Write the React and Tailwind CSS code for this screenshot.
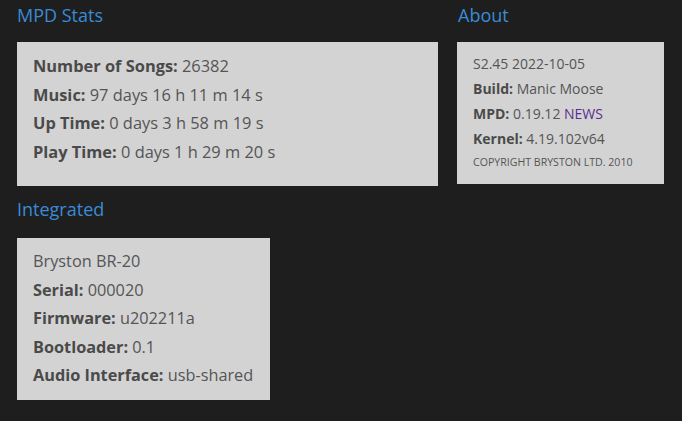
const font = { fontFamily: '"Open Sans", "Noto Sans", sans-serif' };

function Row({ label, value, children }) {
  return (
    <div>
      {label && <b className="font-bold text-[#4a4a4a]">{label}: </b>}
      {value}
      {children}
    </div>
  );
}

export default function App() {
  return (
    <div style={font} className="min-h-[421px] w-[682px] bg-[#1e1e1e] pl-[17px] overflow-hidden">
      <div className="flex gap-[19px]">
        <div className="w-[421px]">
          <h2 className="pt-[2px] mb-[14px] text-[18px] leading-[26px] text-[#3a8bd6] font-normal">MPD Stats</h2>
          <div className="bg-[#d3d3d3] pl-[16px] pt-[10px] pb-[20px] text-[16.4px] leading-[28.5px] text-[#555]">
            <Row label="Number of Songs" value="26382" />
            <Row label="Music" value="97 days 16 h 11 m 14 s" />
            <Row label="Up Time" value="0 days 3 h 58 m 19 s" />
            <Row label="Play Time" value="0 days 1 h 29 m 20 s" />
          </div>

          <h2 className="mt-[10px] mb-[16px] text-[18px] leading-[26px] text-[#3a8bd6] font-normal">Integrated</h2>
          <div className="w-[253px] bg-[#d3d3d3] pl-[16px] pt-[9px] pb-[10px] text-[16.3px] leading-[28.5px] text-[#555]">
            <Row value="Bryston BR-20" />
            <Row label="Serial" value="000020" />
            <Row label="Firmware" value="u202211a" />
            <Row label="Bootloader" value="0.1" />
            <Row label="Audio Interface" value="usb-shared" />
          </div>
        </div>

        <div className="w-[207px]">
          <h2 className="pt-[2px] mb-[14px] pl-px text-[18px] leading-[26px] text-[#3a8bd6] font-normal">About</h2>
          <div className="bg-[#d3d3d3] pl-[16px] pt-[9px] pb-[11px] text-[14px] leading-[25px] text-[#555]">
            <Row value="S2.45 2022-10-05" />
            <Row label="Build" value="Manic Moose" />
            <Row label="MPD" value="0.19.12 ">
              <span className="text-[#5a2d91]">NEWS</span>
            </Row>
            <Row label="Kernel" value="4.19.102v64" />
            <div className="text-[10.6px] leading-[22px]">COPYRIGHT BRYSTON LTD. 2010</div>
          </div>
        </div>
      </div>
    </div>
  );
}
